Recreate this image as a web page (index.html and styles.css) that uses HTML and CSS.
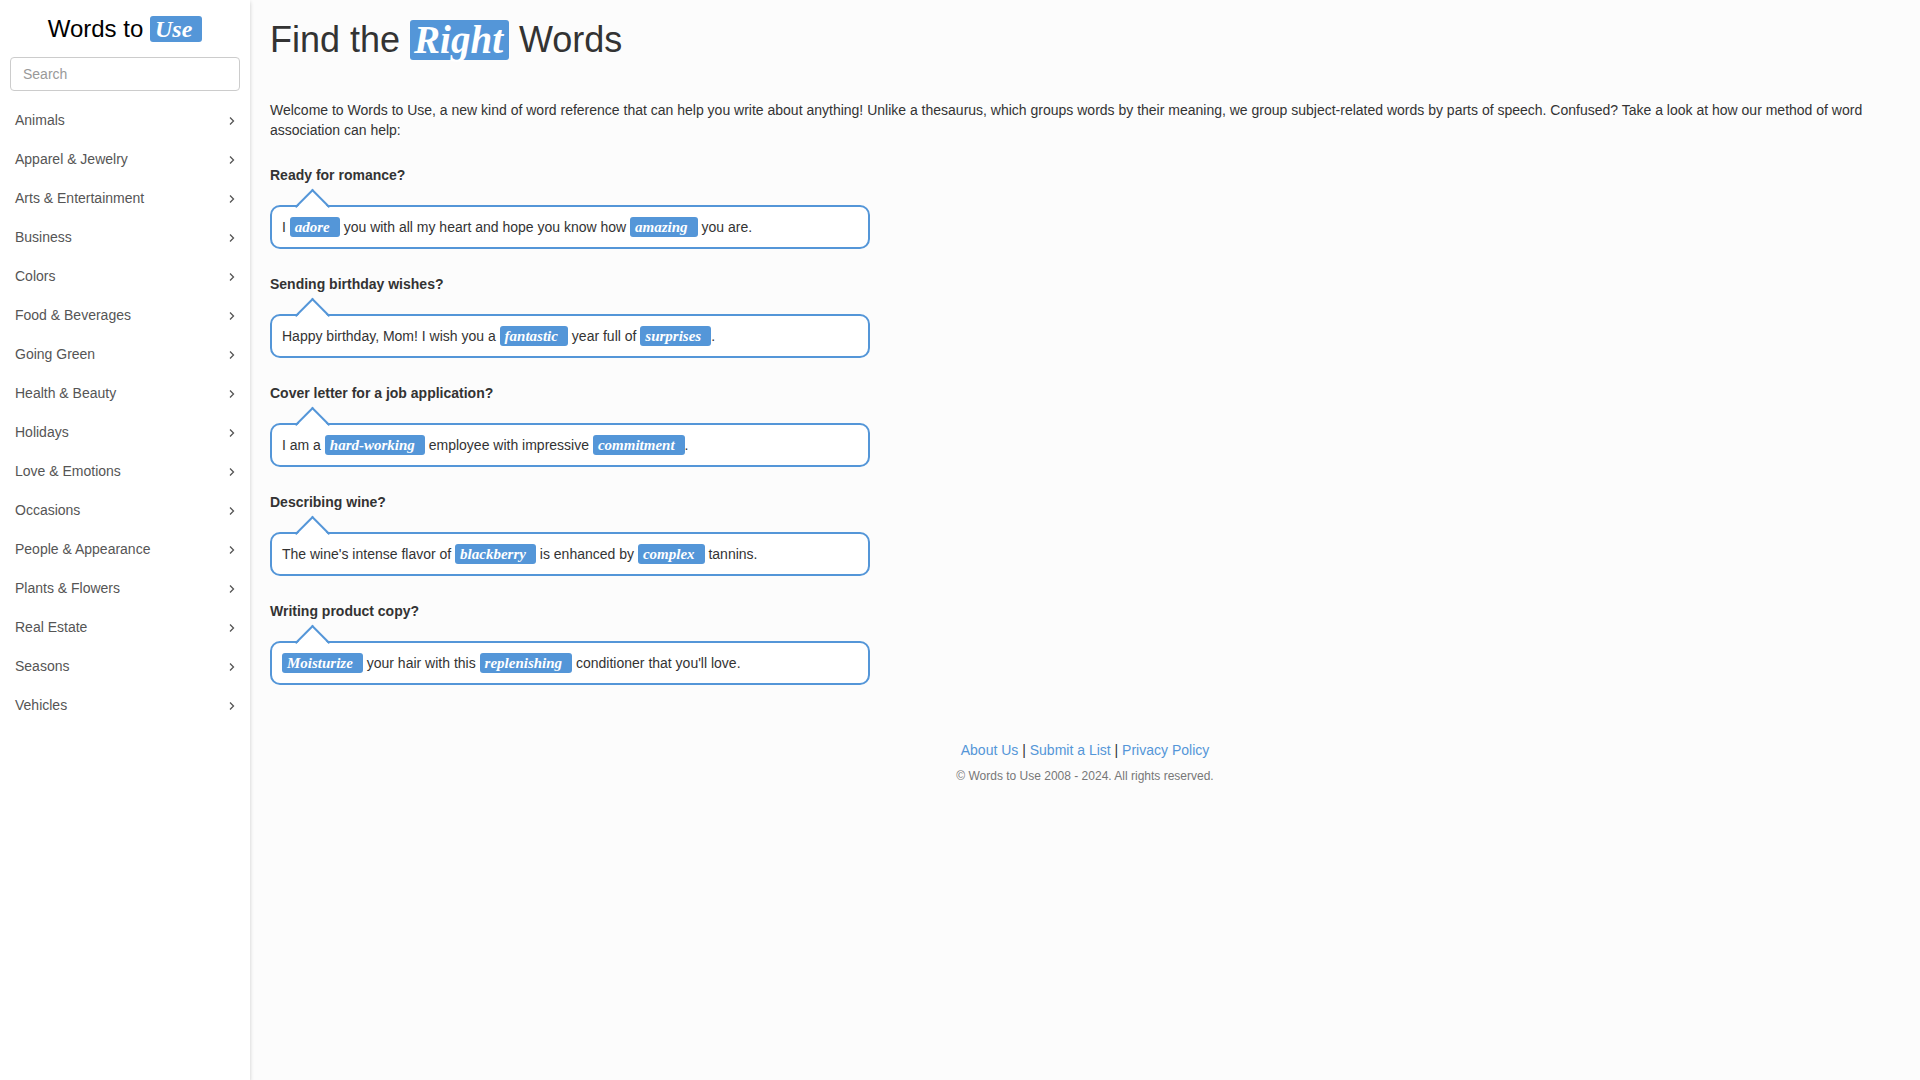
FILE: index.html
```html
<!DOCTYPE html>
<html lang="en">
<head>
<meta charset="utf-8">
<title>Words to Use</title>
<link rel="stylesheet" href="styles.css">
</head>
<body>
<svg class="defs" aria-hidden="true"><symbol id="angle" viewBox="0 0 6 10"><path d="M1 1.500l3.500 3.500-3.500 3.500" fill="none" stroke="currentColor" stroke-width="1.300"/></symbol></svg>
<div class="layout">
<aside class="sidebar">
<a class="brand" href="#">Words to <span class="word word-brand">Use</span></a>
<form class="search"><input type="text" placeholder="Search" aria-label="Search"></form>
<nav class="menu">
<a href="#">Animals<svg><use href="#angle"/></svg></a>
<a href="#">Apparel &amp; Jewelry<svg><use href="#angle"/></svg></a>
<a href="#">Arts &amp; Entertainment<svg><use href="#angle"/></svg></a>
<a href="#">Business<svg><use href="#angle"/></svg></a>
<a href="#">Colors<svg><use href="#angle"/></svg></a>
<a href="#">Food &amp; Beverages<svg><use href="#angle"/></svg></a>
<a href="#">Going Green<svg><use href="#angle"/></svg></a>
<a href="#">Health &amp; Beauty<svg><use href="#angle"/></svg></a>
<a href="#">Holidays<svg><use href="#angle"/></svg></a>
<a href="#">Love &amp; Emotions<svg><use href="#angle"/></svg></a>
<a href="#">Occasions<svg><use href="#angle"/></svg></a>
<a href="#">People &amp; Appearance<svg><use href="#angle"/></svg></a>
<a href="#">Plants &amp; Flowers<svg><use href="#angle"/></svg></a>
<a href="#">Real Estate<svg><use href="#angle"/></svg></a>
<a href="#">Seasons<svg><use href="#angle"/></svg></a>
<a href="#">Vehicles<svg><use href="#angle"/></svg></a>
</nav>
</aside>
<div class="page">
<main>
<h1>Find the <span class="word word-title">Right</span> Words</h1>
<p class="intro">Welcome to Words to Use, a new kind of word reference that can help you write about anything! Unlike a thesaurus, which groups words by their meaning, we group subject-related words by parts of speech. Confused? Take a look at how our method of word association can help:</p>
<section class="example"><h2>Ready for romance?</h2>
<p class="bubble">I <span class="word">adore</span> you with all my heart and hope you know how <span class="word">amazing</span> you are.</p></section>
<section class="example"><h2>Sending birthday wishes?</h2>
<p class="bubble">Happy birthday, Mom! I wish you a <span class="word">fantastic</span> year full of <span class="word">surprises</span>.</p></section>
<section class="example"><h2>Cover letter for a job application?</h2>
<p class="bubble">I am a <span class="word">hard-working</span> employee with impressive <span class="word">commitment</span>.</p></section>
<section class="example"><h2>Describing wine?</h2>
<p class="bubble">The wine's intense flavor of <span class="word">blackberry</span> is enhanced by <span class="word">complex</span> tannins.</p></section>
<section class="example"><h2>Writing product copy?</h2>
<p class="bubble"><span class="word">Moisturize</span> your hair with this <span class="word">replenishing</span> conditioner that you'll love.</p></section>
</main>
<footer>
<p><a href="#">About Us</a> | <a href="#">Submit a List</a> | <a href="#">Privacy Policy</a></p>
<p class="copyright">© Words to Use 2008 - 2024. All rights reserved.</p>
</footer>
</div>
</div>
</body>
</html>
```
FILE: styles.css
```css
* { box-sizing: border-box; }
body {
  margin: 0;
  background: #fcfcfc;
  color: #333;
  font: 14px/20px "Liberation Sans", Arial, sans-serif;
}
h1, h2, p { margin: 0; }
a { color: #5496d8; text-decoration: none; }
.defs { position: absolute; width: 0; height: 0; }
.layout { display: flex; min-height: 100vh; }

.sidebar {
  flex: 0 0 250px;
  padding: 14px 10px;
  background: #fff;
  box-shadow: 0 2px 4px rgba(0, 0, 0, .2);
}
.brand {
  display: block;
  color: #000;
  font-size: 24px;
  line-height: 30px;
  text-align: center;
}
.search { margin: 13px 0 10px; }
.search input {
  display: block;
  width: 100%;
  height: 34px;
  padding: 6px 12px;
  border: 1px solid #ccc;
  border-radius: 4px;
  background: #fff;
  color: #555;
  font: inherit;
}
.search input::placeholder { color: #999; opacity: 1; }
.menu a {
  display: flex;
  align-items: center;
  justify-content: space-between;
  padding: 10px 5px;
  color: #555;
  line-height: 19px;
}
.menu svg { width: 6px; height: 10px; }

.page { flex: 1; min-width: 0; padding: 20px; }
h1 {
  font-size: 36px;
  font-weight: 400;
  line-height: 40px;
  margin-bottom: 40px;
}
.intro { margin-bottom: 25px; }
h2 { font-size: 14px; line-height: 20px; margin-bottom: 20px; }
.example { margin-bottom: 25px; }
.bubble {
  position: relative;
  isolation: isolate;
  max-width: 600px;
  padding: 10px;
  border: 2px solid #5496d8;
  border-radius: 10px;
  background: #fff;
}
.bubble::before {
  content: "";
  position: absolute;
  z-index: -1;
  top: -13px;
  left: 28px;
  width: 23px;
  height: 23px;
  border: solid #5496d8;
  border-width: 2px 0 0 2px;
  background: linear-gradient(135deg, #fff 50%, transparent 50%);
  transform: rotate(45deg);
}
.word {
  display: inline-block;
  height: 20px;
  padding: 0 10px 0 5px;
  border-radius: 3px;
  background: #5496d8;
  color: #fff;
  font: italic 700 15px/20px "Liberation Serif", "Times New Roman", serif;
  vertical-align: top;
}
.word-brand { height: 26px; margin-top: 2px; font-size: 24px; line-height: 26px; }
.word-title { height: 40px; padding: 0 6px 0 4px; font-size: 39px; line-height: 40px; }

footer { padding-top: 30px; text-align: center; }
.copyright { margin-top: 6px; color: #777; font-size: 12px; }
```
